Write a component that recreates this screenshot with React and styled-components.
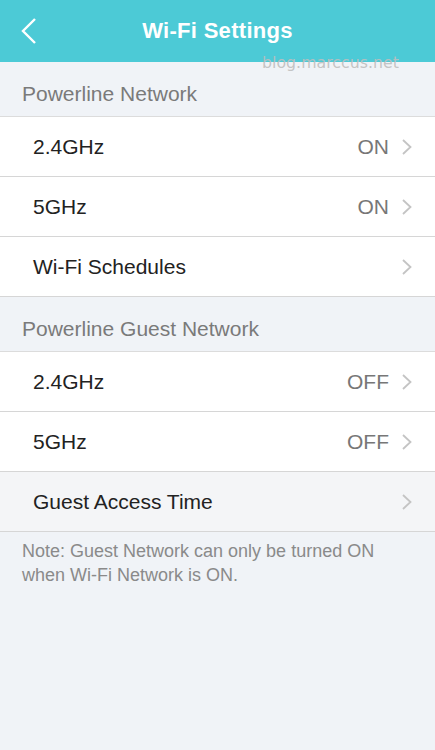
import styled, { createGlobalStyle } from "styled-components"

const Global = createGlobalStyle`
    body {
        margin : 0;
        background : #f0f3f7;
        font-family : "Liberation Sans", Arial, sans-serif;
    }
`
const Page = styled.div`
    position : relative;
    width : 435px;
    min-height : 750px;
    background : #f0f3f7;
`
const Header = styled.header`
    height : 62px;
    background : #4ccad6;
    display : flex;
    align-items : center;
    justify-content : center;
    position : relative;
`
const Back = styled.button`
    position : absolute;
    left : 14px;
    top : 14px;
    width : 30px;
    height : 34px;
    border : none;
    background : none;
    padding : 0;
    display : flex;
    align-items : center;
    justify-content : center;
`
const Title = styled.h1`
    margin : 0;
    color : #fff;
    font-size : 22px;
    font-weight : 700;
    letter-spacing : 0.3px;
`
const Watermark = styled.span`
    position : absolute;
    left : 262px;
    top : 53px;
    font-family : "DejaVu Sans", sans-serif;
    font-size : 15.8px;
    color : rgba(190,190,190,0.9);
    pointer-events : none;
`
const SectionTitle = styled.div`
    height : ${p => p.h}px;
    display : flex;
    align-items : center;
    padding : 9px 0 0 22px;
    box-sizing : border-box;
    color : #7a7a7a;
    font-size : 21px;
    border-bottom : 1px solid #dcdcdc;
`
const Row = styled.div`
    height : 60px;
    box-sizing : border-box;
    display : flex;
    align-items : center;
    padding : 0 22px 0 33px;
    background : ${p => p.muted ? "#f4f5f7" : "#fff"};
    border-bottom : 1px solid #d6d6d6;
    font-size : 21px;
    color : #222;
`
const Label = styled.span`
    flex : 1;
`
const Value = styled.span`
    color : #777;
    margin-right : 12px;
`
const Note = styled.p`
    margin : 0;
    padding : 7px 22px 0;
    font-size : 18px;
    line-height : 24px;
    color : #8a8a8a;
`

const Chevron = () => (
    <svg width="12" height="16" viewBox="0 0 12 16">
        <path d="M2 1 L9.5 8 L2 15" fill="none" stroke="#c4c4c4" strokeWidth="1.8" />
    </svg>
)

const BackIcon = () => (
    <svg width="16" height="26" viewBox="0 0 16 26">
        <path d="M14 1 L2 13 L14 25" fill="none" stroke="#fff" strokeWidth="2.4" />
    </svg>
)

const Item = ({ label, value, muted }) => (
    <Row muted={muted}>
        <Label>{label}</Label>
        {value && <Value>{value}</Value>}
        <Chevron />
    </Row>
)

const App = () => {
  return (
    <>
    <Global />
    <Page>
        <Header>
            <Back><BackIcon /></Back>
            <Title>Wi-Fi Settings</Title>
        </Header>
        <Watermark>blog.marccus.net</Watermark>
        <SectionTitle h={55}>Powerline Network</SectionTitle>
        <Item label="2.4GHz" value="ON" />
        <Item label="5GHz" value="ON" />
        <Item label="Wi-Fi Schedules" />
        <SectionTitle h={55}>Powerline Guest Network</SectionTitle>
        <Item label="2.4GHz" value="OFF" />
        <Item label="5GHz" value="OFF" />
        <Item label="Guest Access Time" muted />
        <Note>Note: Guest Network can only be turned ON when Wi-Fi Network is ON.</Note>
    </Page>
    </>
  )
}

export default App
